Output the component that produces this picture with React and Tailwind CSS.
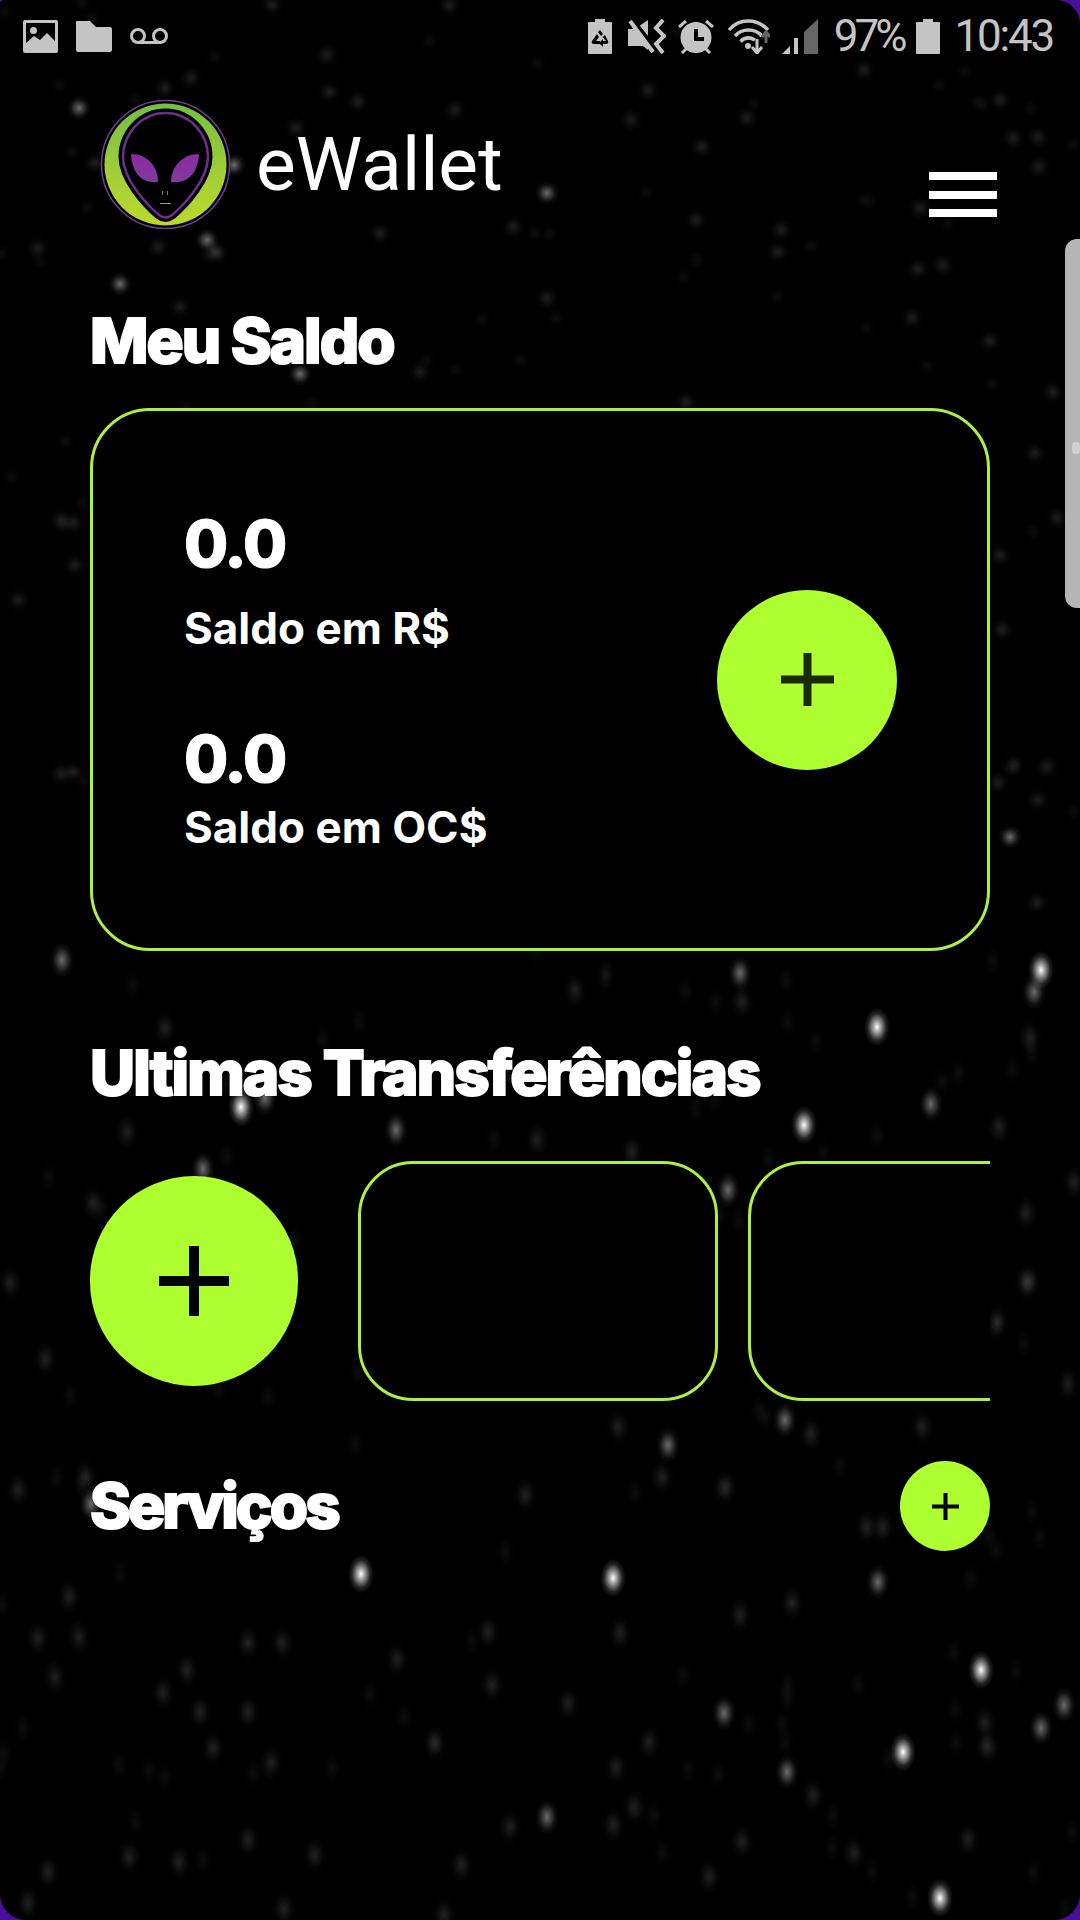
import React from 'react';

const label = { fontFamily: 'Inter, "Liberation Sans", sans-serif' };

// x, y, brightness (3 bright, 2 mid, 1 dim)
const stars = [
  [361,1574,3],[613,1578,3],[878,1582,2],[981,1670,3],[1064,1705,2],[1041,1728,2],[903,1752,3],[787,1772,2],[724,1713,2],[940,1898,3],
  [547,1817,2],[435,1743,1],[28,1903,1],[284,1909,1],[397,1659,1],[488,1632,1],[620,1633,1],[740,1615,1],[792,1603,1],[813,1795,1],
  [968,1839,1],[129,1857,1],[315,1855,1],[461,1865,1],[709,1877,1],[742,1842,1],[616,1767,1],[649,1742,1],[271,1763,1],[213,1748,1],
  [248,1643,1],[282,1643,1],[38,1638,1],[79,1637,1],[568,1703,1],[200,1712,1],[248,1712,1],[163,1693,1],[187,1670,1],[55,1677,1],
  [69,1597,1],[492,1685,1],[985,1723,1],[988,1747,1],[444,1915,1],[854,1853,1],[48,1872,1],[179,1862,1],[248,1840,1],[510,1827,1],
  [613,1825,1],[634,1807,1],[62,960,2],[740,973,2],[742,1002,1],[1041,970,3],[1034,992,2],[877,1027,3],[1030,1037,1],[241,1107,3],
  [265,1098,2],[396,1130,2],[127,1132,1],[931,1104,2],[804,1125,3],[632,1152,1],[203,1169,2],[728,1190,2],[165,1028,1],[575,990,1],
  [537,1140,1],[999,1127,1],[1074,1182,1],[10,1283,1],[93,1203,1],[1026,1283,1],[1026,1213,1],[785,1420,2],[668,1445,2],[618,1427,1],
  [867,1527,1],[883,1527,1],[86,1477,1],[91,1504,2],[724,1488,1],[525,1495,1],[662,1477,1],[811,1434,1],[922,1427,1],[1068,1384,1],
  [997,1323,1],[1029,1281,1],[45,1359,1],[18,1490,1],[79,108,2],[191,78,1],[165,88,1],[327,55,1],[329,92,1],[358,102,1],
  [272,5,1],[449,5,1],[455,110,1],[380,233,1],[513,227,1],[207,240,2],[217,253,1],[234,165,2],[95,163,1],[158,247,1],
  [38,248,1],[296,128,1],[648,90,1],[631,120,1],[702,147,1],[747,118,1],[547,193,2],[696,220,1],[781,230,1],[778,252,1],
  [864,70,1],[1000,100,1],[920,208,1],[1013,138,1],[1038,137,1],[1039,167,1],[120,284,2],[214,251,1],[686,402,1],[61,520,1],
  [18,600,1],[61,774,1],[1010,837,2],[1013,767,1],[1047,767,1],[1038,800,1],[998,783,1],[1002,630,1],[1037,903,1],[918,269,1],
  [990,341,1],[1035,453,1],[1057,518,1],[1000,555,1],[1053,392,1],[943,265,1],[912,318,1],[300,374,2],[180,307,1],[547,298,1],
  [420,372,1],[75,565,1],[73,523,1],[73,772,1],
];

// very faint haze between the placed stars
const haze = [];
let seed = 7;
const next = () => {
  seed = (seed * 16807) % 2147483647;
  return seed / 2147483647;
};
for (let i = 0; i < 220; i++) haze.push([next() * 1080, next() * 1920]);

const Starfield = () => (
  <svg className="absolute inset-0" width="1080" height="1920" viewBox="0 0 1080 1920">
    <defs>
      <radialGradient id="star">
        <stop offset="0%" stopColor="#ffffff" />
        <stop offset="35%" stopColor="#ffffff" stopOpacity="0.55" />
        <stop offset="70%" stopColor="#ffffff" stopOpacity="0.14" />
        <stop offset="100%" stopColor="#ffffff" stopOpacity="0" />
      </radialGradient>
    </defs>
    {haze.map(([x, y], i) => (
      <ellipse key={i} cx={x} cy={y} rx="10" ry={y > 950 ? 17 : 10} fill="url(#star)" opacity="0.05" />
    ))}
    {stars.map(([x, y, b], i) => {
      const rx = b === 3 ? 13 : 12;
      const ry = y > 950 ? rx * 1.5 : rx;
      const opacity = b === 3 ? 1 : b === 2 ? 0.42 : y > 950 ? 0.13 : 0.12;
      return <ellipse key={i} cx={x} cy={y} rx={rx} ry={ry} fill="url(#star)" opacity={opacity} />;
    })}
  </svg>
);

const Plus = ({ size, thick, color }) => (
  <svg width={size} height={size} viewBox={`0 0 ${size} ${size}`}>
    <rect x={(size - thick) / 2} y="0" width={thick} height={size} fill={color} />
    <rect x="0" y={(size - thick) / 2} width={size} height={thick} fill={color} />
  </svg>
);

const AlienLogo = () => (
  <svg width="131" height="131" viewBox="0 0 131 131" className="shrink-0">
    <defs>
      <linearGradient id="ring" x1="0" y1="0" x2="0" y2="1">
        <stop offset="0%" stopColor="#74bd43" />
        <stop offset="55%" stopColor="#a0cd38" />
        <stop offset="100%" stopColor="#bcd92c" />
      </linearGradient>
      <linearGradient id="eye" x1="0" y1="0" x2="0" y2="1">
        <stop offset="0%" stopColor="#8e2aa0" />
        <stop offset="100%" stopColor="#7d3c9f" />
      </linearGradient>
    </defs>
    <circle cx="65.5" cy="65.5" r="64" fill="#000" stroke="#70408c" strokeWidth="1.5" />
    <circle cx="65.5" cy="65.5" r="61" fill="url(#ring)" />
    <path
      d="M65.5 14C90 14 108 35 108 58C108 80 85 105 72 116Q65.5 121 59 116C46 105 23 80 23 58C23 35 41 14 65.5 14Z"
      fill="#000"
      stroke="#000"
      strokeWidth="9"
    />
    <path
      d="M65.5 14C90 14 108 35 108 58C108 80 85 105 72 116Q65.5 121 59 116C46 105 23 80 23 58C23 35 41 14 65.5 14Z"
      fill="#000"
      stroke="#6d2f8a"
      strokeWidth="2.5"
    />
    <path d="M31 55C48 55 58 68 58 83C40 85 32 72 31 55Z" fill="url(#eye)" />
    <path d="M99 55C82 55 71 68 71 83C90 85 98 72 99 55Z" fill="url(#eye)" />
    <rect x="62" y="92" width="1" height="4" fill="#777" />
    <rect x="67" y="92" width="1" height="4" fill="#777" />
    <rect x="60" y="104" width="11" height="1" fill="#999" />
  </svg>
);

const grey = '#c4c4c4';

const StatusIcons = {
  Image: () => (
    <svg width="35" height="33" viewBox="0 0 35 33">
      <rect width="35" height="33" rx="2" fill={grey} />
      <rect x="3" y="3" width="29" height="22" fill="#000" />
      <circle cx="10.5" cy="10.5" r="3.5" fill={grey} />
      <path d="M3 23L11 16L17 20L24 13L32 21V28H3Z" fill={grey} />
    </svg>
  ),
  Folder: () => (
    <svg width="36" height="31" viewBox="0 0 36 31">
      <path d="M1 0H14L20 6H34Q36 6 36 8V29Q36 31 34 31H2Q0 31 0 29V1Q0 0 1 0Z" fill={grey} />
    </svg>
  ),
  Voicemail: () => (
    <svg width="38" height="16" viewBox="0 0 38 16" fill="none" stroke={grey} strokeWidth="3">
      <circle cx="8" cy="8" r="6.5" />
      <circle cx="30" cy="8" r="6.5" />
      <path d="M8 14.5H30" />
    </svg>
  ),
  BatteryRecycle: () => (
    <svg width="24" height="35" viewBox="0 0 24 35">
      <path d="M7 0H17V3H23Q24 3 24 4V34Q24 35 23 35H1Q0 35 0 34V4Q0 3 1 3H7Z" fill={grey} />
      <path d="M12 11L15 15L13 17L10 13ZM9 15L11 18L8 22H12V25H6Q3 25 4 22ZM17 16L20 22Q21 25 18 25H15V28L11 24L15 20V22H18L14.5 18Z" fill="#000" />
    </svg>
  ),
  MuteVibrate: () => (
    <svg width="38" height="35" viewBox="0 0 38 35">
      <path d="M0 10H7L20 1V31L15 27H0Z" fill={grey} />
      <path d="M5 2L28 31" stroke="#000" strokeWidth="5" />
      <path d="M2 2L25 33" stroke={grey} strokeWidth="4" />
      <path d="M35 1L28 9L36 17L28 25L35 34" fill="none" stroke={grey} strokeWidth="4" />
    </svg>
  ),
  Alarm: () => (
    <svg width="36" height="35" viewBox="0 0 36 35">
      <circle cx="18" cy="18.500" r="15.500" fill={grey} />
      <path d="M18 10V20H26" fill="none" stroke="#000" strokeWidth="4" />
      <path d="M1 8L8 2M35 8L28 2M4 34L9 29M32 34L27 29" stroke={grey} strokeWidth="3" />
    </svg>
  ),
  Wifi: () => (
    <svg width="42" height="35" viewBox="0 0 42 35" fill="none">
      <path d="M1 11C11 -1 29 -1 40 11" stroke={grey} strokeWidth="3.500" />
      <path d="M7 17C14 9 27 9 34 17" stroke={grey} strokeWidth="3.500" />
      <path d="M12.500 22.500C17 18 22 18 27 21" stroke={grey} strokeWidth="3.500" />
      <circle cx="20" cy="27" r="3" fill={grey} />
      <path d="M29 20V33M24 28L29 34L34 28" stroke={grey} strokeWidth="3" />
      <path d="M38 24V14M34 18L38 13L42 18" stroke="#666" strokeWidth="3" />
    </svg>
  ),
  Signal: () => (
    <svg width="36" height="35" viewBox="0 0 36 35">
      <path d="M0 35L8 27V35Z" fill={grey} />
      <rect x="12" y="19" width="4" height="16" fill={grey} />
      <path d="M22 13L36 0V35H22Z" fill="#666" />
    </svg>
  ),
  Battery: () => (
    <svg width="24" height="35" viewBox="0 0 24 35">
      <path d="M7 0H17V3H23Q24 3 24 4V34Q24 35 23 35H1Q0 35 0 34V4Q0 3 1 3H7Z" fill={grey} />
    </svg>
  ),
};

const StatusBar = () => (
  <div className="flex h-[72px] items-center justify-between pl-[23px] pr-[27px] text-[#c4c4c4]">
    <div className="flex items-center gap-[18px]">
      <StatusIcons.Image />
      <StatusIcons.Folder />
      <StatusIcons.Voicemail />
    </div>
    <div className="flex items-center">
      <div className="mr-[16px]"><StatusIcons.BatteryRecycle /></div>
      <div className="mr-[12px]"><StatusIcons.MuteVibrate /></div>
      <div className="mr-[14px]"><StatusIcons.Alarm /></div>
      <div className="mr-[12px]"><StatusIcons.Wifi /></div>
      <div className="mr-[16px]"><StatusIcons.Signal /></div>
      <span className="mr-[13px] text-[44px] leading-none tracking-[-4px] font-['Roboto',sans-serif]">97%</span>
      <div className="mr-[14px]"><StatusIcons.Battery /></div>
      <span className="text-[44px] leading-none tracking-[-2.200px] font-['Roboto',sans-serif]">10:43</span>
    </div>
  </div>
);

const Balance = ({ value, text, className, gap }) => (
  <div className={className}>
    <div className="text-[64px] leading-[66px] font-extrabold tracking-[-2px] text-white [-webkit-text-stroke:1px_white]" style={label}>{value}</div>
    <div className={`${gap} text-[44px] leading-[44px] font-bold text-white`} style={label}>{text}</div>
  </div>
);

export default function App() {
  return (
    <div className="relative h-[1920px] w-[1080px] overflow-hidden bg-[#4a0f9a]">
      <div className="absolute inset-0 overflow-hidden rounded-t-[4px] rounded-tr-[24px] rounded-b-[26px] bg-black">
        <Starfield />
      </div>

      <div className="relative">
        <StatusBar />

        <div className="px-[90px]">
          <div className="mt-[27px] flex items-start justify-between">
            <div className="ml-[10px] flex items-center gap-[25px]">
              <AlienLogo />
              <span className="text-[75px] leading-none text-white font-['Roboto',sans-serif]">eWallet</span>
            </div>
            <div className="mt-[73px] -mr-[7px] flex w-[68px] flex-col gap-[10.500px]">
              <div className="h-[8px] bg-white" />
              <div className="h-[8px] bg-white" />
              <div className="h-[8px] bg-white" />
            </div>
          </div>

          <h2 className="mt-[80px] text-[62px] leading-none font-extrabold tracking-[-2px] text-white [-webkit-text-stroke:2px_white]" style={label}>Meu Saldo</h2>

          <div className="mt-[36px] flex h-[543px] items-center justify-between rounded-[60px] border-[3px] border-[#aaf045] bg-black pl-[91px] pr-[90px]">
            <div>
              <Balance value="0.0" text="Saldo em R$" gap="mt-[29px]" />
              <Balance value="0.0" text="Saldo em OC$" gap="mt-[13px]" className="mt-[76px]" />
            </div>
            <button className="flex h-[180px] w-[180px] items-center justify-center rounded-full bg-[#adff2f]">
              <Plus size={53} thick={8} color="#1a2b0c" />
            </button>
          </div>

          <h2 className="mt-[91px] text-[62px] leading-none font-extrabold tracking-[-1.900px] text-white [-webkit-text-stroke:2px_white]" style={label}>Ultimas Transferências</h2>

          <div className="mt-[57px] flex h-[240px] items-center overflow-hidden">
            <button className="mr-[60px] flex h-[210px] w-[208px] shrink-0 items-center justify-center rounded-full bg-[#adff2f]">
              <Plus size={70} thick={10} color="#000" />
            </button>
            <div className="mr-[30px] h-[240px] w-[360px] shrink-0 rounded-[55px] border-[3px] border-[#aaf045] bg-black" />
            <div className="h-[240px] w-[360px] shrink-0 rounded-[55px] border-[3px] border-[#aaf045] bg-black" />
          </div>

          <div className="mt-[60px] flex items-center justify-between">
            <h2 className="text-[62px] leading-none font-extrabold tracking-[-3px] text-white [-webkit-text-stroke:2px_white]" style={label}>Serviços</h2>
            <button className="flex h-[90px] w-[90px] items-center justify-center rounded-full bg-[#adff2f]">
              <Plus size={27} thick={4} color="#000" />
            </button>
          </div>
        </div>
      </div>

      {/* edge panel handle */}
      <div className="absolute right-0 top-[239px] flex h-[369px] w-[15px] items-center rounded-l-[12px] bg-[#b5b5b5]">
        <div className="ml-[7px] mt-[48px] h-[12px] w-[8px] rounded-full bg-[#cfcfcf]" />
      </div>
    </div>
  );
}
